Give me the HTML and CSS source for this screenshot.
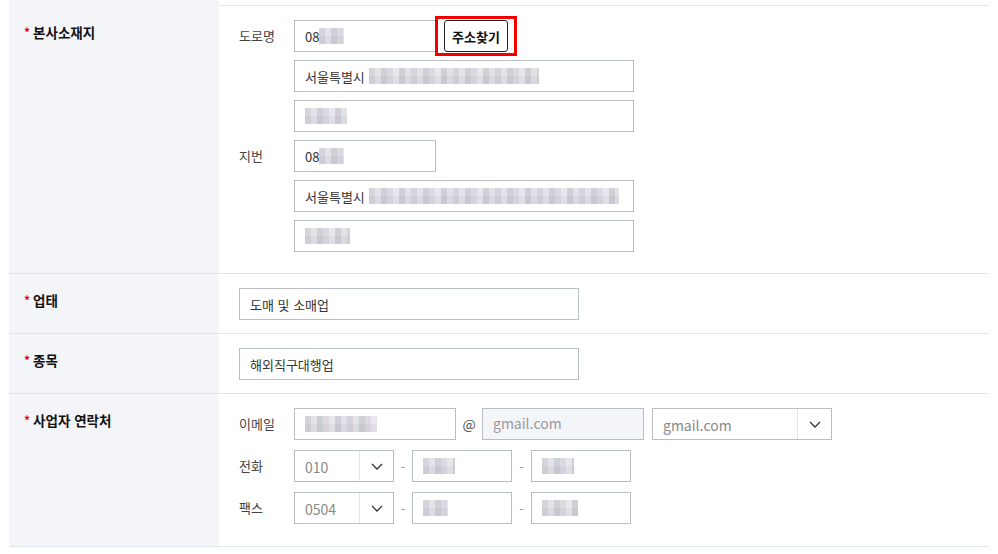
FILE: index.html
```html
<!DOCTYPE html>
<html lang="ko">
<head>
    <meta charset="UTF-8">
    <meta name="viewport" content="width=device-width, initial-scale=1.0">
    <title>사업자 정보</title>
    <link rel="stylesheet" href="styles.css">
</head>
<body>
    <div class="form">
        <div class="row row-top"><div class="th"></div><div class="td"></div></div>

        <div class="row">
            <div class="th"><span class="req">*</span>본사소재지</div>
            <div class="td td-addr">
                <div class="addr">
                    <span class="sub">도로명</span>
                    <div class="line">
                        <div class="box zip">08<i class="blur b25 first"></i></div>
                        <span class="mark"><button type="button" class="btn">주소찾기</button></span>
                    </div>
                    <span></span>
                    <div class="box wide">서울특별시<i class="blur b170"></i></div>
                    <span></span>
                    <div class="box wide"><i class="blur b42 first"></i></div>

                    <span class="sub">지번</span>
                    <div class="box zip">08<i class="blur b25 first"></i></div>
                    <span></span>
                    <div class="box wide">서울특별시<i class="blur b250"></i></div>
                    <span></span>
                    <div class="box wide"><i class="blur b45 first"></i></div>
                </div>
            </div>
        </div>

        <div class="row">
            <div class="th"><span class="req">*</span>업태</div>
            <div class="td">
                <div class="box wide">도매 및 소매업</div>
            </div>
        </div>

        <div class="row">
            <div class="th"><span class="req">*</span>종목</div>
            <div class="td">
                <div class="box wide">해외직구대행업</div>
            </div>
        </div>

        <div class="row row-last">
            <div class="th"><span class="req">*</span>사업자 연락처</div>
            <div class="td td-contact">
                <div class="contact">
                    <div class="line">
                        <span class="sub">이메일</span>
                        <div class="box mail"><i class="blur b72 first"></i></div>
                        <span class="at">@</span>
                        <div class="box mail disabled">gmail.com</div>
                        <div class="box select select-mail">
                            <span class="val">gmail.com</span>
                            <span class="arr"><svg width="12" height="7" viewBox="0 0 12 7"><polyline points="1,1 6,6 11,1" fill="none" stroke="#333" stroke-width="1.3"/></svg></span>
                        </div>
                    </div>
                    <div class="line">
                        <span class="sub">전화</span>
                        <div class="box select select-num">
                            <span class="val">010</span>
                            <span class="arr"><svg width="12" height="7" viewBox="0 0 12 7"><polyline points="1,1 6,6 11,1" fill="none" stroke="#333" stroke-width="1.3"/></svg></span>
                        </div>
                        <span class="dash">-</span>
                        <div class="box num"><i class="blur b32 first"></i></div>
                        <span class="dash dash-wide">-</span>
                        <div class="box num"><i class="blur b32 first"></i></div>
                    </div>
                    <div class="line">
                        <span class="sub">팩스</span>
                        <div class="box select select-num">
                            <span class="val">0504</span>
                            <span class="arr"><svg width="12" height="7" viewBox="0 0 12 7"><polyline points="1,1 6,6 11,1" fill="none" stroke="#333" stroke-width="1.3"/></svg></span>
                        </div>
                        <span class="dash">-</span>
                        <div class="box num"><i class="blur b25 first"></i></div>
                        <span class="dash dash-wide">-</span>
                        <div class="box num"><i class="blur b36 first"></i></div>
                    </div>
                </div>
            </div>
        </div>
    </div>
</body>
</html>
```

FILE: styles.css
```css
body {
    margin: 0;
    font-family: "Noto Sans CJK KR", "Noto Sans", sans-serif;
    font-size: 13px;
    color: #222;
    background: #fff;
}
.form {
    width: 980px;
    margin-left: 9px;
}
.row {
    display: grid;
    grid-template-columns: 210px 770px;
    border-top: 1px solid #e0e4eb;
}
.row-top {
    border-top: none;
    height: 5px;
}
.row-last {
    border-bottom: 1px solid #e0e4eb;
}
.th {
    background: #f4f5f9;
    padding: 14px 0 0 15px;
    line-height: 24px;
    font-size: 13.5px;
    font-weight: bold;
    color: #111;
}
.td {
    padding: 14px 0 13px 20px;
}
.td-addr {
    padding-bottom: 21px;
}
.td-contact {
    padding-bottom: 22px;
}
.req {
    color: #e4002b;
    font-size: 12px;
    margin-right: 3px;
    position: relative;
    top: -1px;
}
.sub {
    color: #444;
    line-height: 32px;
}
.addr {
    display: grid;
    grid-template-columns: 55px auto;
    row-gap: 8px;
    justify-items: start;
}
.line {
    display: flex;
    align-items: center;
}
.contact {
    display: flex;
    flex-direction: column;
    gap: 10px;
}
.contact .sub {
    width: 55px;
}
.box {
    box-sizing: border-box;
    height: 32px;
    border: 1px solid #b9bdc6;
    background: #fff;
    padding: 0 10px;
    display: flex;
    align-items: center;
    color: #333;
    white-space: nowrap;
}
.zip {
    width: 142px;
}
.wide {
    width: 340px;
}
.mail {
    width: 162px;
}
.num {
    width: 100px;
}
.disabled {
    background: #f4f5f9;
    color: #999;
    font-size: 14px;
    padding-bottom: 3px;
}
.select {
    padding: 0;
    color: #888;
    font-size: 14px;
}
.select .val {
    flex: 1;
    padding: 2px 0 0 10px;
}
.select .arr {
    width: 33px;
    height: 100%;
    border-left: 1px solid #e0e4eb;
    display: flex;
    align-items: center;
    justify-content: center;
}
.select-mail {
    width: 180px;
    margin-left: 8px;
}
.select-num {
    width: 100px;
}
.at {
    width: 26px;
    text-align: center;
    color: #555;
    font-size: 14px;
}
.dash {
    width: 18px;
    text-align: center;
    color: #999;
}
.dash-wide {
    width: 19px;
}
.mark {
    display: flex;
    border: 3px solid #f20000;
    padding: 1px 6px;
    margin: -4px 0 -4px -1px;
}
.btn {
    width: 64px;
    height: 32px;
    padding: 0;
    background: #fff;
    border: 1px solid #222;
    border-radius: 3px;
    font-family: inherit;
    font-size: 13px;
    font-weight: bold;
    color: #111;
}
/* pixelated mask over personal data */
.blur {
    display: inline-block;
    height: 16px;
    margin-left: 4px;
    background:
        linear-gradient(180deg, rgba(255,255,255,0) 50%, rgba(120,110,130,0.07) 50%),
        repeating-linear-gradient(90deg, #d6d3dc 0 6px, #e4e3e8 6px 12px, #cdd0d5 12px 18px, #ddd9e2 18px 24px, #e8e7ec 24px 30px, #d1ced6 30px 36px, #dfe2e6 36px 42px);
}
.blur.first {
    margin-left: 0;
}
.b25 { width: 25px; }
.b32 { width: 32px; }
.b36 { width: 36px; }
.b42 { width: 42px; }
.b45 { width: 45px; }
.b72 { width: 72px; }
.b170 { width: 170px; }
.b250 { width: 250px; }
```
